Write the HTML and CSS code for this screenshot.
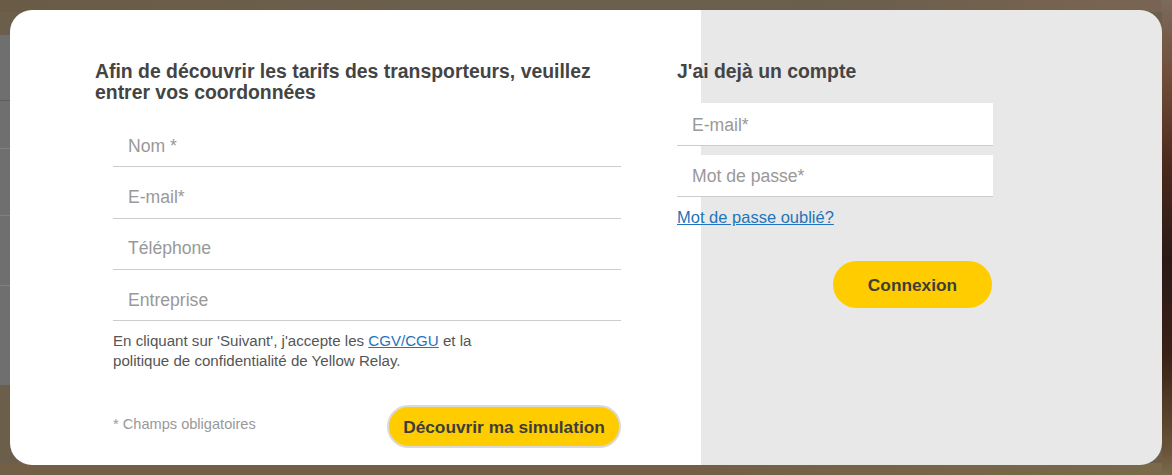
FILE: index.html
```html
<!DOCTYPE html>
<html lang="fr">
<head>
<meta charset="utf-8">
<title>Yellow Relay - Simulation</title>
<link rel="stylesheet" href="styles.css">
</head>
<body>
<div class="backdrop">
  <div class="modal">
    <section class="signup">
      <h2 class="title">Afin de découvrir les tarifs des transporteurs, veuillez entrer vos coordonnées</h2>
      <form class="fields">
        <input class="field" type="text" placeholder="Nom *">
        <input class="field" type="email" placeholder="E-mail*">
        <input class="field" type="tel" placeholder="Téléphone">
        <input class="field" type="text" placeholder="Entreprise">
      </form>
      <p class="terms">En cliquant sur 'Suivant', j'accepte les <a class="link" href="#">CGV/CGU</a> et la politique de confidentialité de Yellow Relay.</p>
      <div class="actions">
        <span class="required">* Champs obligatoires</span>
        <button class="btn btn-outline" type="button">Découvrir ma simulation</button>
      </div>
    </section>
    <section class="login">
      <h2 class="title">J'ai dejà un compte</h2>
      <input class="box-field" type="email" placeholder="E-mail*">
      <input class="box-field second" type="password" placeholder="Mot de passe*">
      <a class="link forgot" href="#">Mot de passe oublié?</a>
      <button class="btn btn-login" type="button">Connexion</button>
    </section>
  </div>
</div>
</body>
</html>
```

FILE: styles.css
```css
* { box-sizing: border-box; }

html, body {
  margin: 0;
  padding: 0;
}

body {
  font-family: "Liberation Sans", Arial, Helvetica, sans-serif;
  background: #6a5d4b;
}

.backdrop {
  width: 1172px;
  height: 475px;
  padding: 10px;
  overflow: hidden;
  background:
    linear-gradient(to bottom, transparent 0, transparent 100px, #5e5e5e 100px, #5e5e5e 101px, transparent 101px, transparent 148px, #808080 148px, #808080 149px, transparent 149px, transparent 215px, #808080 215px, #808080 216px, transparent 216px, transparent 285px, #808080 285px, #808080 286px, transparent 286px) 0 0 / 10px 100% no-repeat,
    linear-gradient(to bottom, transparent 35px, #6f6f6f 35px, #6f6f6f 385px, transparent 385px) 0 0 / 10px 100% no-repeat,
    linear-gradient(to bottom, #7c6a5a 0, #6e4a36 18%, #4a2a1c 35%, #2a1a16 55%, #3a2216 75%, #6a5438 95%, #7a6a48 100%) right 0 top 0 / 10px 100% no-repeat,
    linear-gradient(to right, #6a5b47 0, #6b5f4d 40%, #6a5e4d 70%, #766250 90%, #7a6555 100%) 0 0 / 100% 12px no-repeat,
    linear-gradient(to right, #735f45 0, #745f46 60%, #786a4a 100%) 0 463px / 100% 12px no-repeat,
    #6b5e4b;
}

.modal {
  width: 1152px;
  height: 455px;
  border-radius: 22px;
  overflow: hidden;
  display: grid;
  grid-template-columns: 667px 1fr;
  background: linear-gradient(to right, #ffffff 0, #ffffff 691px, #e8e8e8 691px);
}

.title {
  margin: 0;
  font-size: 19.4px;
  line-height: 21px;
  font-weight: bold;
  color: #444444;
}

/* Left column */
.signup {
  padding: 51px 56px 17px 85px;
  display: flex;
  flex-direction: column;
}

.fields {
  margin: 13px 0 0 18px;
  display: flex;
  flex-direction: column;
}

.field {
  width: 508px;
  height: 51.3px;
  margin: 0;
  padding: 11px 15px 1px;
  border: none;
  border-bottom: 1px solid #cccccc;
  background: transparent;
  font-family: inherit;
  font-size: 17.6px;
  color: #444444;
  outline: none;
}

.field::placeholder,
.box-field::placeholder {
  color: #999999;
  opacity: 1;
}

.terms {
  margin: 10px 0 0 18px;
  max-width: 380px;
  font-size: 15.1px;
  line-height: 20px;
  color: #555555;
}

.link {
  color: #1f74bb;
  text-decoration: underline;
}

.actions {
  margin: 34px 0 0 18px;
  display: flex;
  align-items: center;
  justify-content: space-between;
}

.required {
  font-size: 14.6px;
  line-height: 18px;
  color: #999999;
  padding-bottom: 5px;
}

.btn {
  font-family: inherit;
  font-weight: bold;
  font-size: 17.3px;
  color: #3d3d3d;
  background: #ffcc00;
  border-radius: 999px;
  cursor: pointer;
  line-height: 20px;
}

.btn-outline {
  width: 234px;
  height: 43px;
  padding: 0 14px;
  border: 2px solid #dadada;
}

/* Right column */
.login {
  width: 316px;
  padding-top: 51px;
  display: flex;
  flex-direction: column;
}

.login .title {
  margin-bottom: 21px;
}

.box-field {
  width: 316px;
  height: 43px;
  margin: 0;
  padding: 2px 15px 0;
  border: none;
  border-bottom: 1px solid #cccccc;
  background: #ffffff;
  font-family: inherit;
  font-size: 17.6px;
  color: #444444;
  outline: none;
}

.box-field.second {
  margin-top: 9px;
  height: 42px;
}

.forgot {
  margin-top: 10px;
  font-size: 16.5px;
  line-height: 20px;
  align-self: flex-start;
}

.btn-login {
  margin-top: 34px;
  margin-right: 1px;
  align-self: flex-end;
  width: 159px;
  height: 47px;
  border: none;
  padding: 0;
}
```
